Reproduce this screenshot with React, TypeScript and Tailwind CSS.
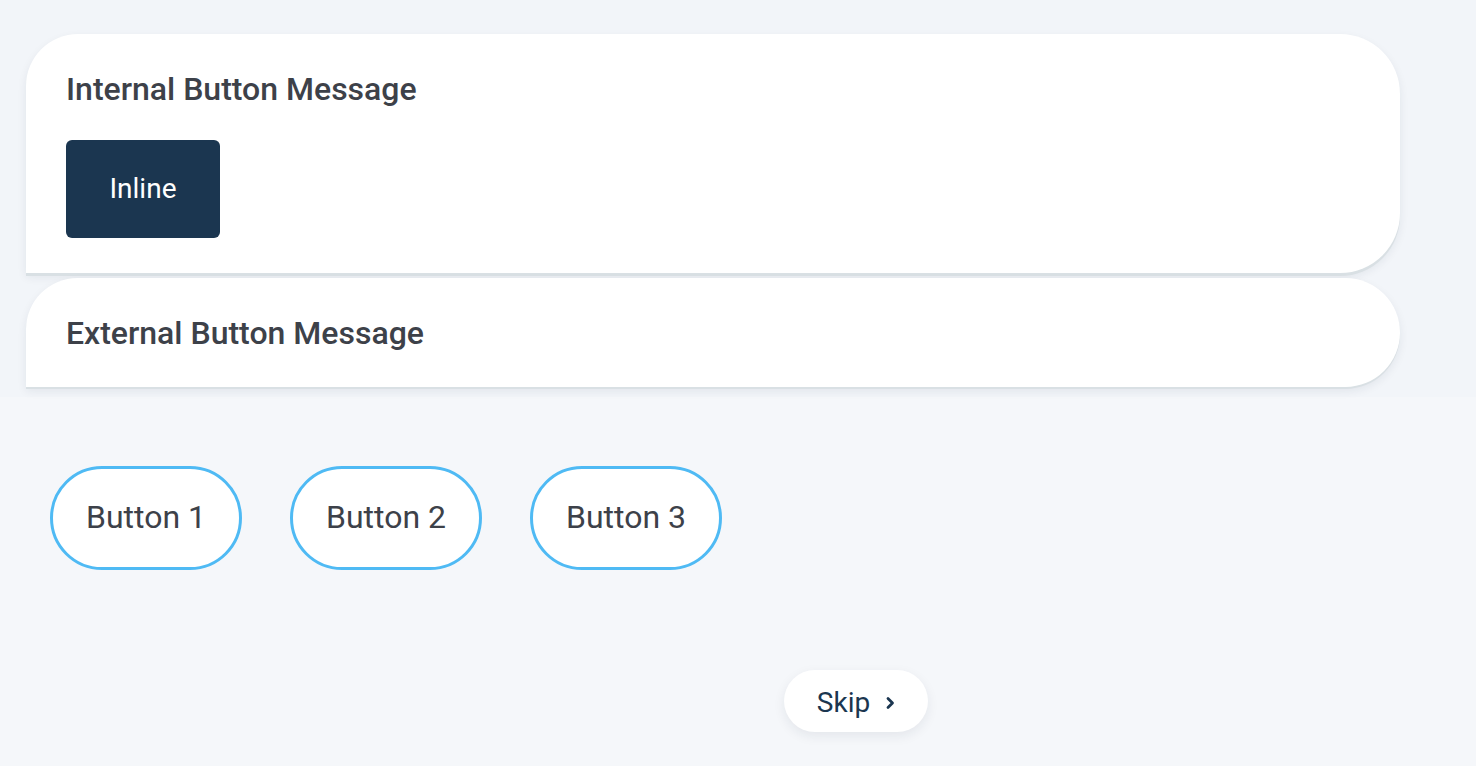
import React from "react";

export default function App() {
  return (
    <div className="min-h-screen w-full bg-[#f5f7fa]" style={{ fontFamily: "Roboto, 'Liberation Sans', sans-serif" }}>
      <div className="bg-[#f2f5f9] pl-[26px] pt-[34px] pb-[10px] flex flex-col gap-[5px]">
        <div className="w-[1374px] h-[239px] bg-white rounded-tl-[52px] rounded-tr-[60px] rounded-br-[60px] rounded-bl-none shadow-[0_3px_0_#d9e0e4,0_4px_10px_rgba(20,40,60,0.08)] pl-[40px] pt-[35px]">
          <div className="text-[32px] leading-[40px] font-medium text-[#3d4149]">Internal Button Message</div>
          <button className="mt-[31px] w-[154px] h-[98px] rounded-[6px] bg-[#1b3650] text-white text-[28px] flex items-center justify-center">
            Inline
          </button>
        </div>
        <div className="w-[1374px] h-[109px] bg-white rounded-tl-[52px] rounded-tr-[55px] rounded-br-[55px] rounded-bl-none shadow-[0_2px_0_#d9e0e4,0_4px_10px_rgba(20,40,60,0.08)] pl-[40px] flex items-center">
          <div className="text-[32px] leading-[40px] font-medium text-[#3d4149]">External Button Message</div>
        </div>
      </div>
      <div className="flex gap-[48px] pl-[50px] mt-[69px]">
        {["Button 1", "Button 2", "Button 3"].map((b) => (
          <button
            key={b}
            className="w-[192px] h-[104px] rounded-full border-[3px] border-[#4fbaf4] bg-white text-[32px] text-[#3d4149] flex items-center justify-center pb-[2px]"
          >
            {b}
          </button>
        ))}
      </div>
      <div className="mt-[100px] pl-[784px]">
        <button className="w-[144px] h-[62px] rounded-[31px] bg-white shadow-[0_4px_12px_rgba(20,40,60,0.08)] flex items-center justify-center gap-[15px] text-[#1b3650] pt-[3px]">
          <span className="text-[28px]">Skip</span>
          <svg width="10" height="16" viewBox="0 0 10 16" fill="none">
            <path d="M3 3.5 L7.5 8 L3 12.5" stroke="#1b3650" strokeWidth="2.8" strokeLinecap="round" strokeLinejoin="round" />
          </svg>
        </button>
      </div>
    </div>
  );
}
